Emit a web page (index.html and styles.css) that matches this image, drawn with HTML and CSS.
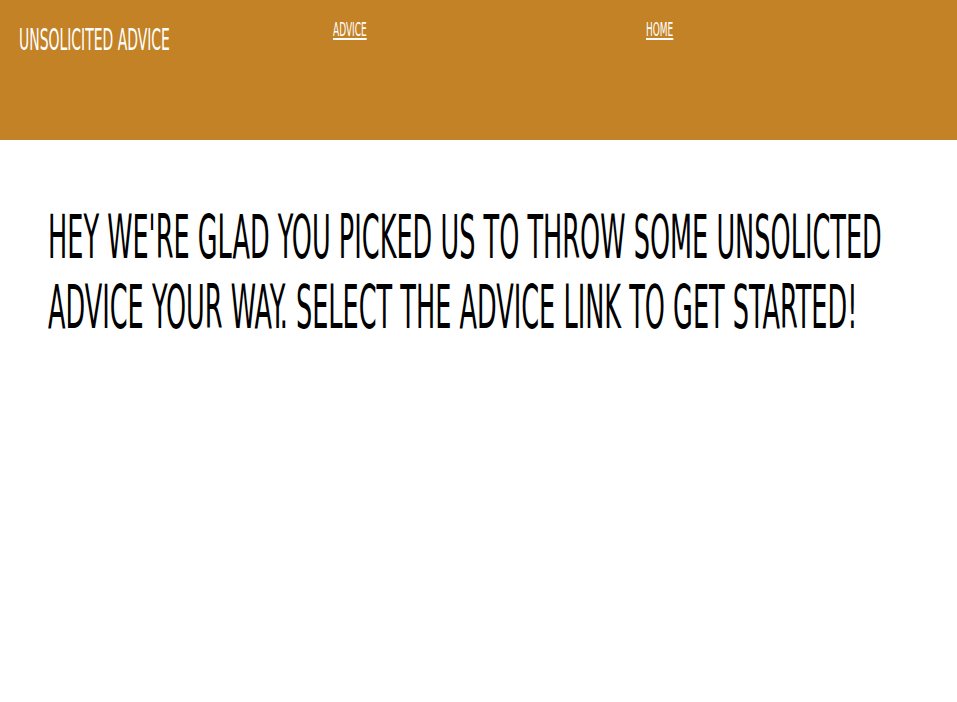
FILE: index.html
```html
<!DOCTYPE html>
<html lang="en">
<head>
<meta charset="utf-8">
<title>Unsolicited Advice</title>
<link rel="stylesheet" href="styles.css">
</head>
<body>
<header class="site-header">
  <div class="brand"><span class="squeeze">unsolicited advice</span></div>
  <nav class="nav-cell"><a class="nav-link" href="#advice"><span class="squeeze link-text">advice</span></a></nav>
  <nav class="nav-cell"><a class="nav-link" href="#home"><span class="squeeze link-text">home</span></a></nav>
</header>
<main class="content">
  <h1 class="intro">Hey we're glad you picked us to throw some unsolicted advice your way. Select the advice link to get started!</h1>
</main>
</body>
</html>
```

FILE: styles.css
```css
html, body {
  margin: 0;
  padding: 0;
  background: #ffffff;
}

body {
  font-family: "Liberation Sans Narrow", "DejaVu Sans Condensed", "Liberation Sans", sans-serif;
  text-transform: uppercase;
  overflow: hidden;
}

.site-header {
  background: #c38226;
  height: 140px;
  display: grid;
  grid-template-columns: 314px 313px 1fr;
  padding-left: 19px;
  box-sizing: border-box;
  align-items: start;
}

.brand {
  color: #ffffff;
  font-size: 31px;
  line-height: 1;
  padding-top: 24px;
  white-space: nowrap;
}

.squeeze {
  display: inline-block;
  transform: scaleX(0.5);
  transform-origin: left center;
}

.nav-cell {
  padding-top: 19px;
  font-size: 20px;
  line-height: 1;
}

.nav-link {
  color: #ffffff;
  text-decoration: none;
  white-space: nowrap;
}

.link-text {
  text-decoration: underline;
  text-decoration-thickness: 2px;
  text-underline-offset: 2px;
}

.content {
  padding: 0 48px;
}

.intro {
  margin: 62px 0 0 0;
  font-weight: normal;
  font-size: 60px;
  line-height: 70px;
  color: #000000;
  width: 1810px;
  transform: scaleX(0.474);
  transform-origin: left top;
}
```
